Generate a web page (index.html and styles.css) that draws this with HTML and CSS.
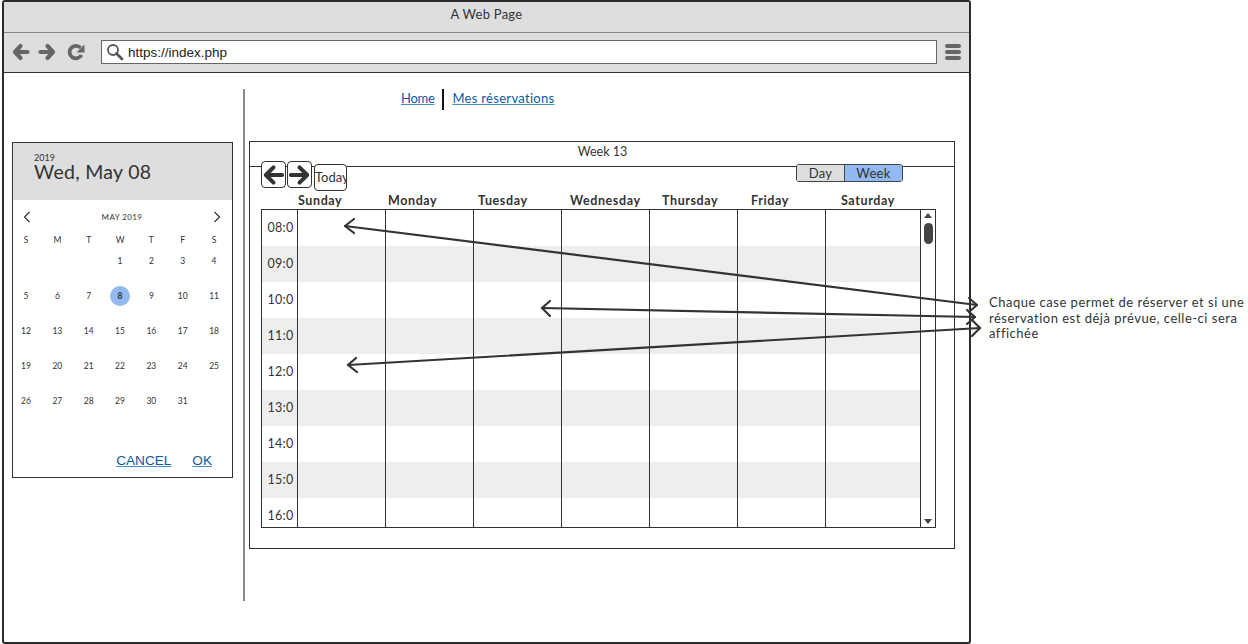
FILE: index.html
```html
<!DOCTYPE html>
<html lang="fr">
<head>
<meta charset="utf-8">
<title>A Web Page</title>
<link rel="stylesheet" href="styles.css">
</head>
<body>
<div class="page">
  <div class="window">
    <div class="titlebar">A Web Page</div>
    <div class="toolbar">
      <svg class="ic ic-back" width="18" height="18" viewBox="0 0 18 18"><path d="M8.500 3 3 9 8.500 15M3.500 9H15.500" fill="none" stroke="#666" stroke-width="4.200" stroke-linecap="round" stroke-linejoin="round"/></svg>
      <svg class="ic ic-next" width="18" height="18" viewBox="0 0 18 18"><path d="M9.500 3 15 9 9.500 15M14.500 9H2.500" fill="none" stroke="#666" stroke-width="4.200" stroke-linecap="round" stroke-linejoin="round"/></svg>
      <svg class="ic ic-reload" width="18" height="18" viewBox="0 0 18 18"><path d="M14.500 12A6.300 6.300 0 1 1 13.500 4.800" fill="none" stroke="#666" stroke-width="3.800"/><path d="M17.500 1.500V9.500H9.500Z" fill="#666"/></svg>
      <div class="url">
        <svg width="18" height="18" viewBox="0 0 18 18"><circle cx="7" cy="7" r="5" fill="none" stroke="#555" stroke-width="1.800"/><path d="M10.500 10.500 16 16" stroke="#555" stroke-width="2.800" stroke-linecap="round"/></svg>
        <span>https://index.php</span>
      </div>
      <div class="burger"><i></i><i></i><i></i></div>
    </div>
    <div class="content">
      <div class="calendar">
        <div class="cal-head">
          <div class="cal-year">2019</div>
          <div class="cal-date">Wed, May 08</div>
        </div>
        <div class="cal-month">
          <svg width="8" height="12" viewBox="0 0 8 12"><path d="M6.500 1 1.500 6 6.500 11" fill="none" stroke="#333" stroke-width="1.200"/></svg>
          <span>MAY 2019</span>
          <svg width="8" height="12" viewBox="0 0 8 12"><path d="M1.500 1 6.500 6 1.500 11" fill="none" stroke="#333" stroke-width="1.200"/></svg>
        </div>
        <div class="cal-week">
          <span>S</span><span>M</span><span>T</span><span>W</span><span>T</span><span>F</span><span>S</span>
        </div>
        <div class="cal-days">
          <span></span><span></span><span></span><span>1</span><span>2</span><span>3</span><span>4</span>
          <span>5</span><span>6</span><span>7</span><span class="sel">8</span><span>9</span><span>10</span><span>11</span>
          <span>12</span><span>13</span><span>14</span><span>15</span><span>16</span><span>17</span><span>18</span>
          <span>19</span><span>20</span><span>21</span><span>22</span><span>23</span><span>24</span><span>25</span>
          <span>26</span><span>27</span><span>28</span><span>29</span><span>30</span><span>31</span><span></span>
        </div>
        <div class="cal-foot"><a href="#">CANCEL</a><a href="#">OK</a></div>
      </div>
      <div class="divider"></div>
      <div class="main">
        <nav class="nav"><a class="nav-home" href="#">Home</a><b></b><a href="#">Mes réservations</a></nav>
        <div class="panel">
          <div class="panel-title">Week 13</div>
          <div class="tools">
            <button class="btn-ic"><svg width="24" height="24" viewBox="0 0 24 24"><path d="M12 4 4 12 12 20M5 12H21" fill="none" stroke="#333" stroke-width="4.200" stroke-linecap="round" stroke-linejoin="round"/></svg></button>
            <button class="btn-ic"><svg width="24" height="24" viewBox="0 0 24 24"><path d="M12 4 20 12 12 20M19 12H3" fill="none" stroke="#333" stroke-width="4.200" stroke-linecap="round" stroke-linejoin="round"/></svg></button>
            <button class="today"><span>Today</span></button>
            <div class="seg"><span class="seg-day">Day</span><span class="seg-week">Week</span></div>
          </div>
          <div class="heads">
            <span class="h-sun">Sunday</span><span class="h-mon">Monday</span><span class="h-tue">Tuesday</span><span class="h-wed">Wednesday</span><span class="h-thu">Thursday</span><span class="h-fri">Friday</span><span class="h-sat">Saturday</span>
          </div>
          <div class="grid">
            <div class="rows">
              <div class="row"><span>08:0</span><i></i><i></i><i></i><i></i><i></i><i></i><i></i></div>
              <div class="row"><span>09:0</span><i></i><i></i><i></i><i></i><i></i><i></i><i></i></div>
              <div class="row"><span>10:0</span><i></i><i></i><i></i><i></i><i></i><i></i><i></i></div>
              <div class="row"><span>11:0</span><i></i><i></i><i></i><i></i><i></i><i></i><i></i></div>
              <div class="row"><span>12:0</span><i></i><i></i><i></i><i></i><i></i><i></i><i></i></div>
              <div class="row"><span>13:0</span><i></i><i></i><i></i><i></i><i></i><i></i><i></i></div>
              <div class="row"><span>14:0</span><i></i><i></i><i></i><i></i><i></i><i></i><i></i></div>
              <div class="row"><span>15:0</span><i></i><i></i><i></i><i></i><i></i><i></i><i></i></div>
              <div class="row"><span>16:0</span><i></i><i></i><i></i><i></i><i></i><i></i><i></i></div>
            </div>
            <div class="scroll">
              <svg class="sc-up" width="8" height="5" viewBox="0 0 8 5"><path d="M4 0 8 5H0Z" fill="#444"/></svg>
              <div class="thumb"></div>
              <svg class="sc-down" width="8" height="5" viewBox="0 0 8 5"><path d="M0 0H8L4 5Z" fill="#444"/></svg>
            </div>
          </div>
        </div>
      </div>
    </div>
  </div>
  <p class="note">Chaque case permet de réserver et si une réservation est déjà prévue, celle-ci sera affichée</p>
  <svg class="arrows" width="1248" height="644" viewBox="0 0 1248 644">
    <g fill="none" stroke="#333" stroke-width="2.200" stroke-linecap="round" stroke-linejoin="round">
      <path d="M345 226 977 305"/><path d="M354 219 345 226 354 233"/><path d="M969 298 977 305 969 312"/>
      <path d="M542 308 975 317"/><path d="M550 301 542 308 550 316"/><path d="M967 310 975 317 967 324"/>
      <path d="M348 365 980 328"/><path d="M356 358 348 365 357 372"/><path d="M972 320 980 328 972 336"/>
    </g>
  </svg>
</div>
</body>
</html>
```
FILE: styles.css
```css
* { box-sizing: border-box; }
html, body { margin: 0; padding: 0; background: #fff; }
body { font-family: Lato, "Noto Sans", sans-serif; color: #333; }
.page { position: relative; display: flex; width: 1248px; height: 644px; overflow: hidden; }
.window { flex: none; width: 969px; height: 644px; margin-left: 2px; border: 2px solid #2c2c2c; border-radius: 3px; display: flex; flex-direction: column; overflow: hidden; }
.titlebar { height: 31px; background: #dedede; border-bottom: 1px solid #888; text-align: center; font-size: 13px; line-height: 25px; letter-spacing: .25px; }
.toolbar { height: 40px; background: #dedede; border-bottom: 1px solid #333; display: flex; align-items: center; padding-bottom: 1px; }
.ic { flex: none; }
.ic-back { margin-left: 8px; }
.ic-next { margin-left: 8px; }
.ic-reload { margin-left: 11px; }
.url { margin-left: 16px; width: 836px; height: 24px; background: #fff; border: 1px solid #666; display: flex; align-items: center; padding-left: 4px; gap: 4px; font-family: "Liberation Sans", Arial, sans-serif; font-size: 13.500px; color: #222; }
.url span { padding-top: 1px; }
.burger { margin-left: 8px; width: 16px; display: flex; flex-direction: column; gap: 2px; }
.burger i { display: block; height: 4px; border-radius: 2px; background: #666; }
.content { flex: 1; display: flex; align-items: flex-start; }
.calendar { flex: none; width: 221px; height: 336px; margin: 69px 0 0 8px; border: 1px solid #333; display: flex; flex-direction: column; }
.cal-head { height: 57px; background: #dedede; padding: 10px 0 0 21px; }
.cal-year { font-size: 9px; line-height: 9px; }
.cal-date { font-size: 19.500px; line-height: 20px; letter-spacing: .3px; }
.cal-month { display: flex; align-items: center; justify-content: space-between; height: 12px; margin-top: 11px; padding: 0 11px 0 10px; font-size: 8px; letter-spacing: .4px; }
.cal-week, .cal-days { display: grid; grid-template-columns: repeat(7, 26px); column-gap: 5.350px; font-size: 8.500px; text-align: center; }
.cal-week { height: 12px; margin-top: 11px; line-height: 12px; }
.cal-days { grid-auto-rows: 35px; margin-top: 1px; line-height: 22px; padding-top: 3px; }
.cal-days span { display: block; height: 22px; }
.cal-days .sel { width: 20px; height: 20px; line-height: 20px; margin: 1px auto 0; border-radius: 50%; background: #92b9f1; font-weight: 700; }
.cal-foot { margin-top: auto; display: flex; justify-content: flex-end; gap: 21px; padding: 0 20px 9px 0; font-family: "Liberation Sans", Arial, sans-serif; font-size: 13.600px; }
.cal-foot a, .nav a { color: #0b5a9f; text-decoration: underline; text-decoration-color: #4d8cc8; }
.divider { flex: none; width: 2px; height: 512px; margin: 16px 0 0 10px; background: #888; }
.main { flex: none; margin: 16px 0 0 4px; }
.nav { height: 21px; display: flex; align-items: center; padding: 0 0 3px 152px; font-size: 13px; letter-spacing: .3px; }
.nav .nav-home { letter-spacing: -.3px; }
.nav b { flex: none; align-self: flex-start; width: 2px; height: 21px; margin: 0 8px; background: #111; }
.panel { width: 706px; height: 408px; margin-top: 31px; border: 1px solid #333; }
.panel-title { height: 25px; border-bottom: 1px solid #333; text-align: center; font-size: 12.500px; line-height: 20px; padding-left: 1px; }
.tools { display: flex; align-items: flex-start; height: 27px; margin-top: -6px; padding: 0 51px 0 11px; }
button { font: inherit; color: inherit; padding: 0; background: #fff; border: 1px solid #333; border-radius: 4px; display: block; }
.btn-ic { width: 25px; height: 27px; margin-right: 1px; display: flex; align-items: center; justify-content: center; }
.today { width: 33px; height: 27px; margin: 3px 0 0 1px; padding-bottom: 2px; overflow: hidden; font-size: 13px; white-space: nowrap; text-align: left; }
.seg { margin: 3px 0 0 auto; width: 107px; height: 18px; border: 1px solid #444; border-radius: 3px; display: flex; overflow: hidden; font-size: 13px; line-height: 16px; text-align: center; letter-spacing: .3px; }
.seg-day { width: 48px; background: #dedede; border-right: 1px solid #444; }
.seg-week { flex: 1; background: #92b9f1; }
.heads { display: flex; height: 21px; padding-top: 6px; font-size: 12.500px; line-height: 14px; font-weight: 700; letter-spacing: .6px; white-space: nowrap; }
.h-sun { margin-left: 48px; width: 90px; }
.h-mon { width: 90px; }
.h-tue { width: 92px; }
.h-wed { width: 92px; }
.h-thu { width: 89px; }
.h-fri { width: 90px; }
.grid { width: 675px; height: 319px; margin-left: 11px; border: 1px solid #333; display: flex; overflow: hidden; }
.rows { width: 659px; }
.row { height: 36px; display: grid; grid-template-columns: 36px repeat(6, 88px) 95px; }
.row:nth-child(even) { background: #eee; }
.row span, .row i { border-right: 1px solid #333; }
.row span { padding-left: 2px; text-align: center; font-size: 12.500px; line-height: 35px; letter-spacing: .3px; }
.scroll { flex: 1; display: flex; flex-direction: column; align-items: center; padding: 3px 0 3px; }
.thumb { width: 9px; height: 21px; margin-top: 5px; border-radius: 5px; background: #444; }
.sc-down { margin-top: auto; }
.note { flex: none; width: 259px; margin: 295px 0 0 18px; font-size: 13px; line-height: 15.500px; letter-spacing: .5px; }
.arrows { position: absolute; left: 0; top: 0; pointer-events: none; }
```
